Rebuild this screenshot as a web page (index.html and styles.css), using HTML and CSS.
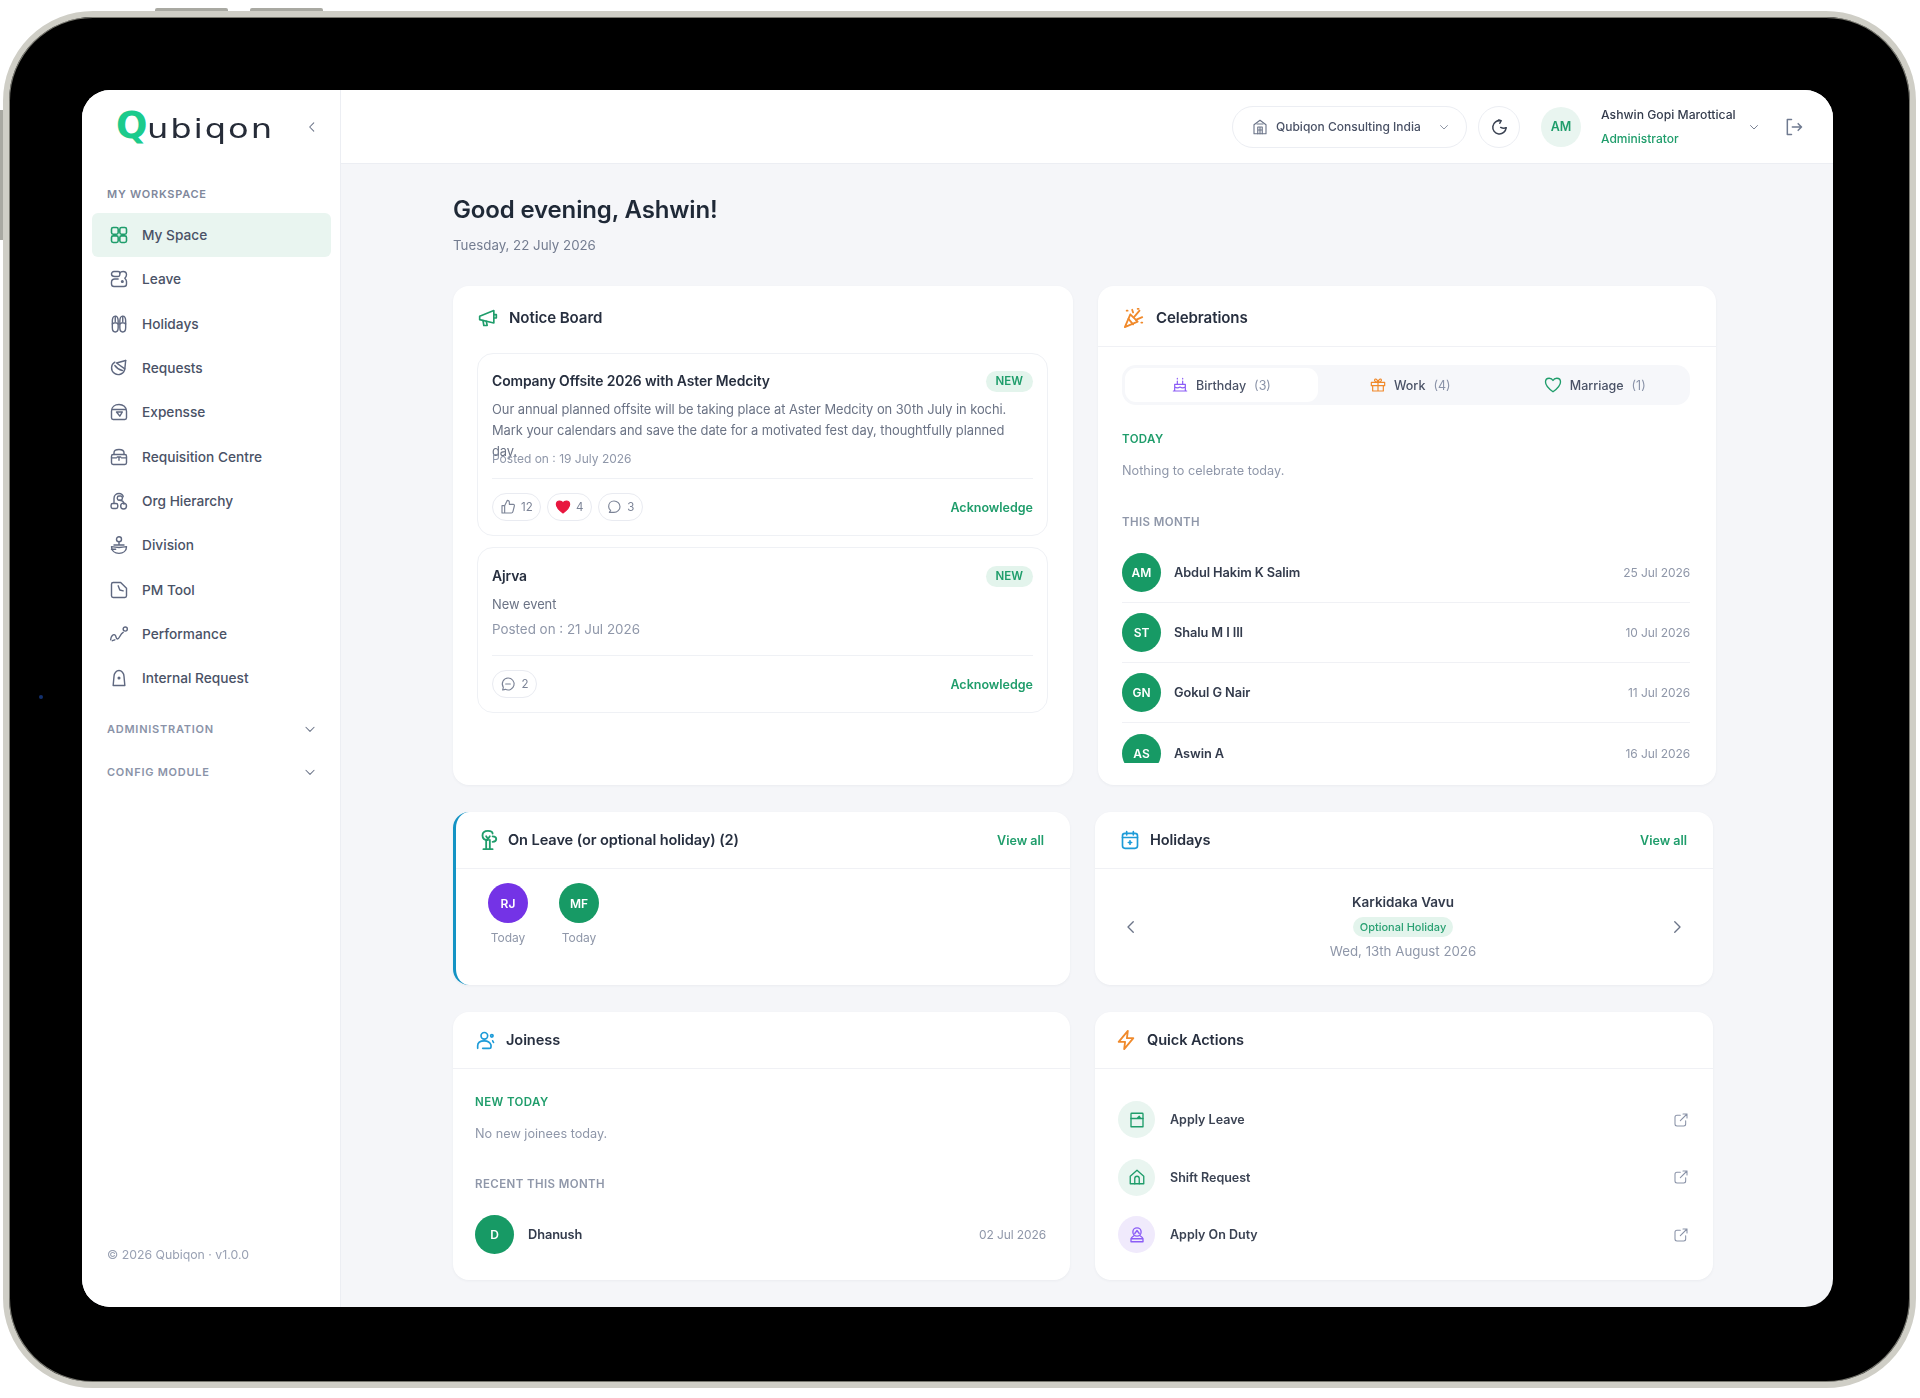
FILE: index.html
```html
<!DOCTYPE html>
<html>
<head>
<meta charset="UTF-8">
<title>Qubiqon - My Space</title>
<link rel="stylesheet" href="styles.css">
</head>
<body>
<div class="device">
  <span class="hw-btn hw-top-a"></span>
  <span class="hw-btn hw-top-b"></span>
  <span class="hw-btn hw-side"></span>
  <span class="camera"></span>

  <div class="screen">
    <!-- sidebar -->
    <aside class="sidebar">
      <div class="logo-row">
        <div class="logo"><span class="logo-q">Q</span><span class="logo-rest">ubiqon</span></div>
        <svg class="ico-14 collapse" viewBox="0 0 24 24"><path d="M15 5l-7 7 7 7"/></svg>
      </div>
      <div class="side-label">MY WORKSPACE</div>
      <nav class="side-nav">
        <a class="side-item active">
          <svg class="ico-20" viewBox="0 0 24 24"><rect x="3" y="3" width="8" height="8" rx="2"/><rect x="13" y="3" width="8" height="8" rx="2"/><rect x="3" y="13" width="8" height="8" rx="2"/><rect x="13" y="13" width="8" height="8" rx="2"/></svg>
          My Space</a>
        <a class="side-item">
          <svg class="ico-20" viewBox="0 0 24 24"><path d="M6 3h5c1.500 0 2 1 2 2v2c0 1-1 2-2 2H7C4 9 3 7 3 6s1-3 3-3z"/><path d="M13 5c1-2 3-2 4-2 3 0 4 2 4 4 0 2-1 3-2 4 1 1 2 2 2 4v3c0 2-1 3-3 3H6c-2 0-3-1-3-3v-2c0-3 2-4 4-4h4"/><circle cx="16" cy="15" r="1"/></svg>
          Leave</a>
        <a class="side-item">
          <svg class="ico-20" viewBox="0 0 24 24"><path d="M7.500 2.500c2.500 0 3.500 2.500 3.500 6v8c0 3-1.500 5-3.500 5S4 19.500 4 16.500v-8c0-3.500 1-6 3.500-6z"/><path d="M16.500 2.500c2.500 0 3.500 2.500 3.500 6v8c0 3-1.500 5-3.500 5s-3.500-2-3.500-5v-8c0-3.500 1-6 3.500-6z"/><path d="M4 12c1.500-2 5.500-2 7 0M13 12c1.500-2 5.500-2 7 0M7.500 3v6M16.500 3v6"/></svg>
          Holidays</a>
        <a class="side-item">
          <svg class="ico-20" viewBox="0 0 24 24"><path d="M20 3l-1 10a8 8 0 1 1-12-8"/><path d="M20 3L9 6l10 7"/><path d="M7 9c2 3 5 5 9 6"/></svg>
          Requests</a>
        <a class="side-item">
          <svg class="ico-20" viewBox="0 0 24 24"><path d="M5 21h14c1 0 2-1 2-2v-8c0-5-4-8-9-8s-9 3-9 8v8c0 1 1 2 2 2z"/><path d="M4 9h16"/><path d="M9 12h7l-3 5z"/></svg>
          Expensse</a>
        <a class="side-item">
          <svg class="ico-20" viewBox="0 0 24 24"><path d="M6 9V7c0-3 3-4 6-4s6 1 6 4v2"/><rect x="3" y="9" width="18" height="12" rx="2"/><path d="M3 13h6M15 13h6M12 12v4M10 12h4"/></svg>
          Requisition Centre</a>
        <a class="side-item">
          <svg class="ico-20" viewBox="0 0 24 24"><path d="M6 14V9c0-4 3-6 6-6s5 2 5 4"/><rect x="10" y="6" width="6" height="5" rx="2"/><path d="M12 11c3 0 6 1 6 5"/><rect x="2.500" y="15" width="8" height="6" rx="2"/><circle cx="17.500" cy="18" r="3.500"/></svg>
          Org Hierarchy</a>
        <a class="side-item">
          <svg class="ico-20" viewBox="0 0 24 24"><circle cx="12" cy="5" r="3"/><path d="M12 8v4M6 12h12"/><path d="M3 14c5 1 13 1 18 0 0 5-4 8-9 8s-9-3-9-8z"/><path d="M3 17h5"/></svg>
          Division</a>
        <a class="side-item">
          <svg class="ico-20" viewBox="0 0 24 24"><path d="M5 3h9l7 7v9c0 1-1 2-2 2H5c-1 0-2-1-2-2V5c0-1 1-2 2-2z"/><path d="M11 7l2 5 4 1"/></svg>
          PM Tool</a>
        <a class="side-item">
          <svg class="ico-20" viewBox="0 0 24 24"><path d="M2 19c0-4 3-7 5-6s1 5 3 5c3 0 3-6 7-8"/><path d="M7 19l-3 1"/><circle cx="19.500" cy="6" r="2.500"/></svg>
          Performance</a>
        <a class="side-item">
          <svg class="ico-20" viewBox="0 0 24 24"><path d="M5 21l1-11c0-4 3-7 6-7s6 3 6 7l1 11z"/><circle cx="12" cy="12" r="1"/></svg>
          Internal Request</a>
      </nav>
      <div class="side-group first-group">ADMINISTRATION
        <svg class="ico-14" viewBox="0 0 24 24"><path d="M5 9l7 7 7-7"/></svg></div>
      <div class="side-group">CONFIG MODULE
        <svg class="ico-14" viewBox="0 0 24 24"><path d="M5 9l7 7 7-7"/></svg></div>
      <div class="side-foot">© 2026 Qubiqon · v1.0.0</div>
    </aside>

    <div class="main">
      <!-- top bar -->
      <header class="topbar">
        <div class="org-pill">
          <svg class="ico-18" viewBox="0 0 24 24"><path d="M4 21V9l8-6 8 6v12z"/><path d="M8 8h8M9 21v-9h6v9M12 12v9M9 16h6"/></svg>
          <span>Qubiqon Consulting India</span>
          <svg class="ico-12" viewBox="0 0 24 24"><path d="M5 9l7 7 7-7"/></svg>
        </div>
        <div class="refresh">
          <svg class="ico-20 dark" viewBox="0 0 24 24"><path d="M14 4.500a8 8 0 1 0 6.500 8.500"/><path d="M14 12.500c2 1 5 1 6.500.5"/><path d="M11.500 3.500l3 1-1.500 3"/></svg>
        </div>
        <div class="user-av">AM</div>
        <div class="user-text">
          <div class="user-name">Ashwin Gopi Marottical</div>
          <div class="user-role">Administrator</div>
        </div>
        <svg class="ico-12 user-chev" viewBox="0 0 24 24"><path d="M5 9l7 7 7-7"/></svg>
        <svg class="ico-20 logout" viewBox="0 0 24 24"><path d="M9 3H4v18h5"/><path d="M10 12h11M17 8l4 4-4 4"/></svg>
      </header>

      <div class="content">
        <h1 class="greeting">Good evening, Ashwin!</h1>
        <div class="today">Tuesday, 22 July 2026</div>

        <div class="row row-top">
          <!-- notice board -->
          <section class="card">
            <div class="card-head notice-head">
              <svg class="ico-20 green" viewBox="0 0 24 24"><path d="M2 10l17-7v15L2 14z"/><path d="M19 8h3v4h-3"/><path d="M6 15l1 6h4l-1-5"/></svg>
              <h2>Notice Board</h2>
            </div>
            <div class="notice-list">
              <article class="notice">
                <div class="notice-title"><h3>Company Offsite 2026 with Aster Medcity</h3><span class="badge-new">NEW</span></div>
                <p class="notice-text">Our annual planned offsite will be taking place at Aster Medcity on 30th July in kochi. Mark your calendars and save the date for a motivated fest day, thoughtfully planned day.</p>
                <div class="posted">Posted on : 19 July 2026</div>
                <div class="notice-foot">
                  <div class="chips">
                    <span class="chip"><svg class="ico-16" viewBox="0 0 24 24"><path d="M7 10v11H3V10zM7 10l4-8c2 0 3 1 3 3v3h6c1 0 2 1 1.500 2.500l-2 8c-.3 1.500-1 2.500-2.500 2.500H7"/></svg>12</span>
                    <span class="chip"><svg class="ico-16 heart" viewBox="0 0 24 24"><path d="M12 21C5 16 2 12 2 8c0-3 2-5 5-5 2 0 4 1 5 3 1-2 3-3 5-3 3 0 5 2 5 5 0 4-3 8-10 13z"/></svg>4</span>
                    <span class="chip"><svg class="ico-16" viewBox="0 0 24 24"><path d="M12 3c5 0 9 4 9 8.500S17 20 12 20H5l2-3c-2-1.500-3-3.500-3-5.500C4 7 7 3 12 3z"/></svg>3</span>
                  </div>
                  <a class="ack">Acknowledge</a>
                </div>
              </article>
              <article class="notice notice-short">
                <div class="notice-title"><h3>Ajrva</h3><span class="badge-new">NEW</span></div>
                <p class="notice-text">New event</p>
                <div class="posted">Posted on : 21 Jul 2026</div>
                <div class="notice-foot">
                  <div class="chips">
                    <span class="chip"><svg class="ico-16" viewBox="0 0 24 24"><path d="M12 3a9 9 0 1 1-4 17l-4 1 1-4A9 9 0 0 1 12 3z"/><path d="M8.500 12h7"/></svg>2</span>
                  </div>
                  <a class="ack">Acknowledge</a>
                </div>
              </article>
            </div>
          </section>

          <!-- celebrations -->
          <section class="card">
            <div class="card-head celeb-head">
              <svg class="ico-22 orange" viewBox="0 0 24 24"><path d="M8 8L2 22l14-6z"/><path d="M6 13l5 6M12 11l6-7M14 14l7-3M10 3l1 3M4 4h1M20 17h1M16 2h1"/></svg>
              <h2>Celebrations</h2>
            </div>
            <div class="celeb-body">
              <div class="tabs">
                <div class="tab active">
                  <svg class="ico-16 purple" viewBox="0 0 24 24"><path d="M4 21V11h16v10zM2 21h20M4 15c3 2 5 2 8 0 3 2 5 2 8 0M8 11V6M16 11V6M8 2v1M16 2v1"/></svg>
                  Birthday <span class="tab-count">(3)</span></div>
                <div class="tab">
                  <svg class="ico-16 orange" viewBox="0 0 24 24"><rect x="2" y="8" width="20" height="5"/><path d="M4 13v8h16v-8M12 8v13M12 8C9 8 6 6 7 4s4-1 5 4c1-5 4-6 5-4s-2 4-5 4z"/></svg>
                  Work <span class="tab-count">(4)</span></div>
                <div class="tab">
                  <svg class="ico-18 green" viewBox="0 0 24 24"><path d="M12 21C5 16 2 12 2 8c0-3 2-5 5-5 2 0 4 1 5 3 1-2 3-3 5-3 3 0 5 2 5 5 0 4-3 8-10 13z"/></svg>
                  Marriage <span class="tab-count">(1)</span></div>
              </div>
              <div class="sec-label sec-green">TODAY</div>
              <div class="sec-empty">Nothing to celebrate today.</div>
              <div class="sec-label sec-gray">THIS MONTH</div>
              <div class="people">
                <div class="person"><span class="avatar">AM</span><span class="p-name">Abdul Hakim K Salim</span><span class="p-date">25 Jul 2026</span></div>
                <div class="person"><span class="avatar">ST</span><span class="p-name">Shalu M I III</span><span class="p-date">10 Jul 2026</span></div>
                <div class="person"><span class="avatar">GN</span><span class="p-name">Gokul G Nair</span><span class="p-date">11 Jul 2026</span></div>
                <div class="person"><span class="avatar">AS</span><span class="p-name">Aswin A</span><span class="p-date">16 Jul 2026</span></div>
              </div>
            </div>
          </section>
        </div>

        <div class="row row-mid">
          <!-- on leave -->
          <section class="card card-blue">
            <div class="card-head line-head">
              <svg class="ico-22 green" viewBox="0 0 24 24"><path d="M10 22V12M14 22V12M7 22h10"/><path d="M12 12c-3 0-6-1-6-5s3-5 6-5 5 1 5 3"/><path d="M10 8l2 3 2-3M17 8c2 0 4 1 4 3s-2 3-4 3"/></svg>
              <h2>On Leave (or optional holiday) (2)</h2>
              <a class="view-all">View all</a>
            </div>
            <div class="leave-list">
              <div class="leave-person"><span class="avatar av-purple">RJ</span><span class="leave-when">Today</span></div>
              <div class="leave-person"><span class="avatar">MF</span><span class="leave-when">Today</span></div>
            </div>
          </section>

          <!-- holidays -->
          <section class="card">
            <div class="card-head line-head">
              <svg class="ico-20 blue" viewBox="0 0 24 24"><rect x="3" y="4" width="18" height="18" rx="3"/><path d="M3 9h18M8 2v4M16 2v4M10 15h4M12 13v4"/></svg>
              <h2>Holidays</h2>
              <a class="view-all">View all</a>
            </div>
            <div class="holiday-body">
              <svg class="ico-18 dim" viewBox="0 0 24 24"><path d="M15 5l-7 7 7 7"/></svg>
              <div class="holiday-info">
                <div class="holiday-name">Karkidaka Vavu</div>
                <span class="holiday-badge">Optional Holiday</span>
                <div class="holiday-date">Wed, 13th August 2026</div>
              </div>
              <svg class="ico-18 dim" viewBox="0 0 24 24"><path d="M9 5l7 7-7 7"/></svg>
            </div>
          </section>
        </div>

        <div class="row row-low">
          <!-- joiness -->
          <section class="card">
            <div class="card-head line-head join-head">
              <svg class="ico-20 blue" viewBox="0 0 24 24"><circle cx="10" cy="7" r="4"/><path d="M2 22v-3c0-4 3-6 8-6s7 2 8 5v2c0 1-1 2-2 2H8"/><circle cx="19" cy="7" r="1.500"/><path d="M20 13l1 2"/></svg>
              <h2>Joiness</h2>
            </div>
            <div class="join-body">
              <div class="sec-label sec-green">NEW TODAY</div>
              <div class="sec-empty">No new joinees today.</div>
              <div class="sec-label sec-gray">RECENT THIS MONTH</div>
              <div class="people join-people">
                <div class="person"><span class="avatar">D</span><span class="p-name">Dhanush</span><span class="p-date">02 Jul 2026</span></div>
              </div>
            </div>
          </section>

          <!-- quick actions -->
          <section class="card">
            <div class="card-head line-head quick-head">
              <svg class="ico-22 orange" viewBox="0 0 24 24"><path d="M14 2L4 14h7l-1 8 10-12h-7z"/></svg>
              <h2>Quick Actions</h2>
            </div>
            <div class="quick-body">
              <div class="quick-row">
                <span class="q-ico q-green"><svg class="ico-18" viewBox="0 0 24 24"><path d="M5 3h14a1 1 0 0 1 1 1v17H4V4a1 1 0 0 1 1-1z"/><path d="M4 10h16M12 10l3-3 2 3"/></svg></span>
                <span class="q-name">Apply Leave</span>
                <svg class="ico-16 ext" viewBox="0 0 24 24"><path d="M11 5H6a3 3 0 0 0-3 3v10a3 3 0 0 0 3 3h10a3 3 0 0 0 3-3v-5"/><path d="M11 13L21 3M15 3h6v6"/></svg>
              </div>
              <div class="quick-row">
                <span class="q-ico q-green"><svg class="ico-18" viewBox="0 0 24 24"><path d="M3 11l9-8 9 8v10H3z"/><path d="M9 21v-7a3 3 0 0 1 6 0v7"/></svg></span>
                <span class="q-name">Shift Request</span>
                <svg class="ico-16 ext" viewBox="0 0 24 24"><path d="M11 5H6a3 3 0 0 0-3 3v10a3 3 0 0 0 3 3h10a3 3 0 0 0 3-3v-5"/><path d="M11 13L21 3M15 3h6v6"/></svg>
              </div>
              <div class="quick-row">
                <span class="q-ico q-purple"><svg class="ico-18" viewBox="0 0 24 24"><circle cx="12" cy="8" r="5.500"/><path d="M9 10l3-4 3 4"/><path d="M8 13c-2 1-4 3-4 5v3h16v-3c0-2-2-4-4-5M4 17h16"/></svg></span>
                <span class="q-name">Apply On Duty</span>
                <svg class="ico-16 ext" viewBox="0 0 24 24"><path d="M11 5H6a3 3 0 0 0-3 3v10a3 3 0 0 0 3 3h10a3 3 0 0 0 3-3v-5"/><path d="M11 13L21 3M15 3h6v6"/></svg>
              </div>
            </div>
          </section>
        </div>
      </div>
    </div>
  </div>
</div>
</body>
</html>
```

FILE: styles.css
```css
* {
  box-sizing: border-box;
}

html, body {
  margin: 0;
  background: #fff;
}

body {
  font-family: Inter, "Noto Sans", sans-serif;
  color: #1f2937;
  overflow: hidden;
  height: 1398px;
}

svg {
  fill: none;
  stroke: currentColor;
  stroke-width: 1.8;
  stroke-linecap: round;
  stroke-linejoin: round;
  flex: none;
}

h1, h2, h3, p {
  margin: 0;
}

.ico-12 { width: 12px; height: 12px; }
.ico-14 { width: 14px; height: 14px; }
.ico-16 { width: 16px; height: 16px; }
.ico-18 { width: 18px; height: 18px; }
.ico-20 { width: 20px; height: 20px; }
.ico-22 { width: 22px; height: 22px; }

.green { color: #1f9d6b; }
.orange { color: #f08a2c; }
.purple { color: #8b5cf6; }
.blue { color: #1d9bd8; }
.dark { color: #3a4252; }
.dim { color: #6b7488; }

/* device frame */
.device {
  position: relative;
  margin: 11px 0 0 3px;
  width: 1913px;
  height: 1377px;
  padding: 73px 77px 75px 73px;
  background: #000;
  border: 6px solid #cfcec6;
  border-radius: 90px;
  box-shadow: inset 0 0 0 1px #77776f;
}

.hw-btn {
  position: absolute;
  background: #a9a9a2;
}

.hw-top-a, .hw-top-b {
  top: -9px;
  height: 3px;
  width: 73px;
  border-radius: 2px 2px 0 0;
}

.hw-top-a { left: 146px; }
.hw-top-b { left: 241px; }

.hw-side {
  top: 93px;
  left: -9px;
  width: 3px;
  height: 130px;
}

.camera {
  position: absolute;
  left: 30px;
  top: 678px;
  width: 4px;
  height: 4px;
  border-radius: 50%;
  background: #12306e;
}

.screen {
  display: flex;
  height: 100%;
  border-radius: 28px;
  overflow: hidden;
  background: #f5f6f9;
  filter: blur(0.35px);
}

/* sidebar */
.sidebar {
  width: 259px;
  flex: none;
  display: flex;
  flex-direction: column;
  background: #fff;
  border-right: 1px solid #eceef3;
  padding: 0 8px 0 10px;
}

.logo-row {
  height: 73px;
  display: flex;
  align-items: center;
  justify-content: space-between;
  padding: 0 6px 0 24px;
}

.logo {
  display: flex;
  align-items: baseline;
  line-height: 1;
  margin-top: -2px;
}

.logo-q {
  font-family: "DejaVu Sans", sans-serif;
  font-weight: 700;
  font-size: 37px;
  color: #1ccb8c;
}

.logo-rest {
  font-family: "DejaVu Sans", sans-serif;
  font-size: 27px;
  letter-spacing: 1.5px;
  color: #262c38;
  transform: scaleX(1.25);
  transform-origin: left center;
}

.collapse {
  color: #6b7488;
  margin-right: 7px;
}

.side-label {
  margin-top: 23px;
  padding-left: 15px;
  font-size: 11px;
  line-height: 16px;
  font-weight: 600;
  letter-spacing: 0.75px;
  color: #7f889c;
}

.side-nav {
  margin-top: 11px;
}

.side-item {
  display: flex;
  align-items: center;
  gap: 13px;
  height: 44.3px;
  padding-left: 17px;
  border-radius: 6px;
  font-size: 13.7px;
  font-weight: 500;
  color: #4a5266;
}

.side-item svg {
  color: #5f6880;
  stroke-width: 1.7;
}

.side-item.active {
  background: #e9f5f0;
  margin-right: 1px;
}

.side-item.active svg {
  color: #1f9d6b;
  stroke-width: 1.9;
}

.side-group {
  display: flex;
  align-items: center;
  justify-content: space-between;
  height: 43px;
  padding: 0 15px 0 15px;
  font-size: 11px;
  font-weight: 600;
  letter-spacing: 0.75px;
  color: #8a93a8;
}

.side-group svg {
  color: #6b7488;
}

.first-group {
  margin-top: 7px;
}

.side-foot {
  margin-top: auto;
  padding: 0 0 44px 15px;
  font-size: 12.3px;
  line-height: 16px;
  color: #99a1b3;
}

/* main */
.main {
  flex: 1;
  min-width: 0;
  display: flex;
  flex-direction: column;
}

.topbar {
  height: 74px;
  flex: none;
  display: flex;
  align-items: center;
  justify-content: flex-end;
  padding-right: 29px;
  background: #fff;
  border-bottom: 1px solid #eceef3;
}

.org-pill {
  display: flex;
  align-items: center;
  width: 235px;
  height: 42px;
  padding: 0 16px 0 18px;
  border: 1px solid #eceef3;
  border-radius: 21px;
  font-size: 12px;
  font-weight: 500;
  color: #4a5266;
}

.org-pill svg {
  color: #6b7488;
  stroke-width: 1.5;
}

.org-pill span {
  margin-left: 7px;
  flex: 1;
  white-space: nowrap;
}

.refresh {
  display: flex;
  align-items: center;
  justify-content: center;
  width: 42px;
  height: 42px;
  margin-left: 11px;
  border: 1px solid #eceef3;
  border-radius: 50%;
}

.user-av {
  display: flex;
  align-items: center;
  justify-content: center;
  width: 40px;
  height: 40px;
  margin-left: 21px;
  border-radius: 50%;
  background: #e9f5f0;
  color: #1f9d6b;
  font-size: 12.5px;
  font-weight: 600;
}

.user-text {
  width: 147px;
  margin-left: 20px;
}

.user-name {
  font-size: 12.2px;
  line-height: 16px;
  font-weight: 500;
  color: #333b4c;
  white-space: nowrap;
}

.user-role {
  margin-top: 8px;
  font-size: 12px;
  line-height: 16px;
  font-weight: 500;
  color: #1f9d6b;
}

.user-chev {
  color: #6b7488;
}

.logout {
  margin-left: 24px;
  color: #6f7a90;
}

.content {
  flex: 1;
  padding: 31px 117px 0 112px;
}

.greeting {
  font-size: 24px;
  line-height: 30px;
  font-weight: 600;
  letter-spacing: -0.15px;
  color: #1f2937;
}

.today {
  margin-top: 10px;
  font-size: 13.3px;
  line-height: 20px;
  color: #737c90;
}

.row {
  display: grid;
  column-gap: 25px;
  margin-bottom: 27px;
}

.row-top {
  margin-top: 31px;
  height: 499px;
  grid-template-columns: 620px 618px;
}

.row-mid {
  height: 173px;
  grid-template-columns: 617px 618px;
}

.row-low {
  height: 268px;
  grid-template-columns: 617px 618px;
}

.card {
  background: #fff;
  border-radius: 16px;
  box-shadow: 0 1px 3px rgba(40, 50, 80, 0.05);
  overflow: hidden;
}

.card-blue {
  border-left: 3px solid #1493c4;
}

.card-head {
  display: flex;
  align-items: center;
  gap: 10px;
  padding-left: 25px;
}

.card-head svg {
  stroke-width: 2;
}

.card-head h2 {
  font-size: 14.6px;
  font-weight: 600;
  letter-spacing: -0.1px;
  color: #272f3f;
}

.notice-head {
  height: 67px;
  padding-bottom: 4px;
  gap: 11px;
}

.celeb-head {
  height: 61px;
  padding-top: 3px;
  gap: 11px;
  border-bottom: 1px solid #f0f1f5;
}

.notice-head h2,
.celeb-head h2 {
  font-size: 15.100px;
}

.line-head {
  height: 57px;
  padding-right: 26px;
  border-bottom: 1px solid #f0f1f5;
}

.card-blue .line-head {
  padding-left: 21px;
  gap: 9px;
}

.join-head {
  padding-left: 23px;
}

.quick-head {
  padding-left: 20px;
}

.view-all {
  margin-left: auto;
  font-size: 12.5px;
  font-weight: 600;
  color: #1f9d6b;
}

/* notice board */
.notice-list {
  display: flex;
  flex-direction: column;
  gap: 11px;
  padding: 0 25px 0 24px;
}

.notice {
  height: 183px;
  padding: 15px 14px 0;
  border: 1px solid #eff1f5;
  border-radius: 16px;
}

.notice-short {
  height: 166px;
  padding-top: 16px;
}

.notice-title {
  display: flex;
  align-items: center;
  justify-content: space-between;
  height: 24px;
}

.notice-title h3 {
  font-size: 13.9px;
  font-weight: 600;
  letter-spacing: -0.1px;
  color: #272f3f;
}

.badge-new {
  padding: 0 10px;
  height: 21px;
  line-height: 21px;
  border-radius: 11px;
  background: #e3f4ec;
  color: #1f9d6b;
  font-size: 11.5px;
  font-weight: 600;
}

.notice-text {
  height: 52.5px;
  margin-top: 5.5px;
  font-size: 12.9px;
  line-height: 21px;
  letter-spacing: -0.05px;
  color: #6b7385;
}

.posted {
  font-size: 12px;
  line-height: 16px;
  color: #8f97a9;
}

.notice-foot {
  display: flex;
  align-items: center;
  justify-content: space-between;
  margin-top: 11px;
  padding-top: 14px;
  border-top: 1px solid #eff1f5;
}

.notice-short .notice-text {
  height: 20px;
  margin-top: 7px;
  line-height: 20px;
}

.notice-short .posted {
  margin-top: 4px;
  font-size: 13.4px;
  line-height: 20px;
}

.notice-short .notice-foot {
  margin-top: 16px;
}

.chips {
  display: flex;
  gap: 6px;
}

.chip {
  display: flex;
  align-items: center;
  justify-content: center;
  gap: 5px;
  min-width: 45px;
  height: 28px;
  padding: 0 7px;
  border: 1px solid #e9ebf1;
  border-radius: 14px;
  font-size: 11.5px;
  color: #7b8396;
}

.chip svg {
  stroke-width: 1.7;
}

.chip .heart {
  color: #e8173f;
  fill: #e8173f;
}

.ack {
  font-size: 12.5px;
  font-weight: 600;
  color: #1f9d6b;
}

/* celebrations */
.celeb-body {
  padding: 18px 26px 0 24px;
}

.tabs {
  display: flex;
  height: 40px;
  padding: 3px;
  border-radius: 14px;
  background: #f6f7fa;
}

.tab {
  flex: 1;
  display: flex;
  align-items: center;
  justify-content: center;
  gap: 8px;
  border-radius: 11px;
  font-size: 12.5px;
  font-weight: 500;
  color: #4a5266;
}

.tab.active {
  flex: 0 0 193px;
  background: #fff;
}

.tab-count {
  color: #8a93a8;
  font-weight: 400;
}

.sec-label {
  font-size: 11.5px;
  line-height: 16px;
  font-weight: 600;
  letter-spacing: 0.4px;
}

.sec-green {
  margin-top: 25px;
  color: #1f9d6b;
}

.celeb-body .sec-green {
  margin-top: 26px;
}

.sec-gray {
  margin-top: 33px;
  color: #8f97a9;
}

.join-body .sec-gray {
  margin-top: 32px;
}

.sec-empty {
  margin-top: 14px;
  font-size: 12.7px;
  line-height: 20px;
  color: #8f97a9;
}

.people {
  margin-top: 13px;
  height: 220px;
  overflow: hidden;
}

.person {
  display: flex;
  align-items: center;
  height: 60px;
  border-bottom: 1px solid #f0f1f5;
}

.person:last-child {
  border-bottom: 0;
}

.avatar {
  display: flex;
  align-items: center;
  justify-content: center;
  width: 39px;
  height: 39px;
  flex: none;
  border-radius: 50%;
  background: #179a65;
  color: #fff;
  font-size: 12px;
  font-weight: 600;
}

.av-purple {
  background: #7433e6;
}

.p-name {
  margin-left: 13px;
  font-size: 12.8px;
  font-weight: 600;
  letter-spacing: -0.1px;
  color: #333b4c;
}

.join-people .p-name {
  margin-left: 14px;
}

.p-date {
  margin-left: auto;
  font-size: 12px;
  letter-spacing: -0.1px;
  color: #8f97a9;
}

/* on leave */
.leave-list {
  display: flex;
  gap: 31px;
  padding: 14px 0 0 32px;
}

.leave-person {
  width: 40px;
  display: flex;
  flex-direction: column;
  align-items: center;
  gap: 7px;
}

.leave-person .avatar {
  width: 40px;
  height: 40px;
}

.leave-when {
  font-size: 12px;
  line-height: 16px;
  color: #8f97a9;
}

/* holidays */
.holiday-body {
  display: flex;
  align-items: center;
  justify-content: space-between;
  height: 116px;
  padding: 0 27px;
}

.holiday-info {
  display: flex;
  flex-direction: column;
  align-items: center;
  margin: -2px 2px 0 0;
}

.holiday-name {
  font-size: 13.5px;
  line-height: 20px;
  font-weight: 600;
  color: #333b4c;
}

.holiday-badge {
  margin-top: 5px;
  height: 20px;
  line-height: 20px;
  padding: 0 7px;
  border-radius: 10px;
  background: #e3f4ec;
  color: #2aa173;
  font-size: 11px;
  font-weight: 500;
}

.holiday-date {
  margin-top: 4px;
  font-size: 13.3px;
  line-height: 20px;
  color: #8f97a9;
}

/* joiness */
.join-body {
  padding: 0 24px 0 22px;
}

.join-people {
  margin-top: 12px;
  height: 60px;
}

/* quick actions */
.quick-body {
  padding: 22px 24px 0 23px;
}

.quick-row {
  display: flex;
  align-items: center;
  height: 57.500px;
}

.q-ico {
  display: flex;
  align-items: center;
  justify-content: center;
  width: 37px;
  height: 37px;
  border-radius: 50%;
}

.q-green {
  background: #e9f5f0;
  color: #1f9d6b;
}

.q-purple {
  background: #f0eafc;
  color: #8b5cf6;
}

.q-name {
  margin-left: 15px;
  font-size: 12.5px;
  font-weight: 600;
  color: #3a4252;
}

.ext {
  margin-left: auto;
  color: #8a93a8;
  stroke-width: 1.6;
}
```
